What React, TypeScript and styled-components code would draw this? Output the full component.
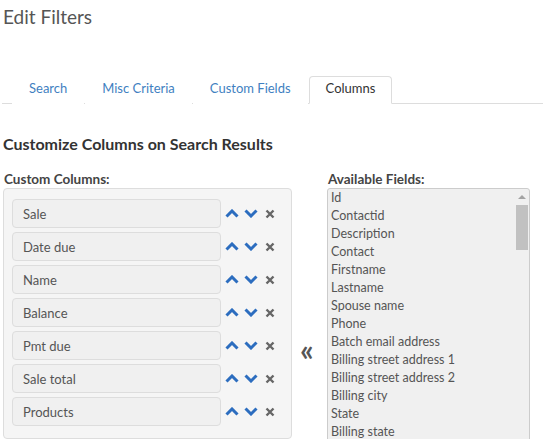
import React from "react";
import styled, { createGlobalStyle } from "styled-components";

const customColumns = ["Sale", "Date due", "Name", "Balance", "Pmt due", "Sale total", "Products"];

const availableFields = [
  "Id",
  "Contactid",
  "Description",
  "Contact",
  "Firstname",
  "Lastname",
  "Spouse name",
  "Phone",
  "Batch email address",
  "Billing street address 1",
  "Billing street address 2",
  "Billing city",
  "State",
  "Billing state",
  "Billing zip",
  "Country",
];

const tabs = ["Search", "Misc Criteria", "Custom Fields", "Columns"];

const App: React.FC = () => {
  return (
    <Page>
      <GlobalStyle />
      <Title>Edit Filters</Title>

      <TabBar>
        {tabs.map((t) => (
          <Tab key={t} $active={t === "Columns"}>
            {t}
          </Tab>
        ))}
      </TabBar>

      <Heading>Customize Columns on Search Results</Heading>

      <Columns>
        <div>
          <Label>Custom Columns:</Label>
          <Panel>
            {customColumns.map((c) => (
              <ItemRow key={c}>
                <Item>{c}</Item>
                <Controls>
                  <IconButton>
                    <svg width="14" height="9" viewBox="0 0 14 9">
                      <polyline points="1.5,7.5 7,2 12.5,7.5" fill="none" stroke="#2c6dbf" strokeWidth="3" />
                    </svg>
                  </IconButton>
                  <IconButton>
                    <svg width="14" height="9" viewBox="0 0 14 9">
                      <polyline points="1.5,1.5 7,7 12.5,1.5" fill="none" stroke="#2c6dbf" strokeWidth="3" />
                    </svg>
                  </IconButton>
                  <IconButton>
                    <svg width="10" height="10" viewBox="0 0 10 10">
                      <path d="M1.5 1.5 L8.5 8.5 M8.5 1.5 L1.5 8.5" stroke="#666" strokeWidth="2.4" />
                    </svg>
                  </IconButton>
                </Controls>
              </ItemRow>
            ))}
          </Panel>
        </div>

        <Middle>
          <MoveLeft>«</MoveLeft>
        </Middle>

        <div>
          <Label>Available Fields:</Label>
          <ListBox>
            <ListItems>
              {availableFields.map((f) => (
                <ListItem key={f}>{f}</ListItem>
              ))}
            </ListItems>
            <ScrollTrack>
              <ScrollArrow />
              <ScrollThumb />
            </ScrollTrack>
          </ListBox>
        </div>
      </Columns>
    </Page>
  );
};

export default App;

const GlobalStyle = createGlobalStyle`
  body {
    margin: 0;
    background: #fff;
    font-family: Lato, "Liberation Sans", sans-serif;
    color: #555;
  }
`;

const Page = styled.div`
  padding: 0 0 0 3px;
  height: 439px;
  overflow: hidden;
`;

const Title = styled.h1`
  margin: 0;
  padding-top: 5px;
  font-size: 19px;
  font-weight: 400;
  line-height: 24px;
  color: #555;
`;

const TabBar = styled.div`
  display: flex;
  gap: 1px;
  margin: 47px 0 0 -1px;
  padding-left: 10px;
  border-bottom: 1px solid #ddd;
`;

const Tab = styled.div<{ $active?: boolean }>`
  height: 26px;
  box-sizing: content-box;
  line-height: 23px;
  padding: 0 16px;
  font-size: 13px;
  color: ${(p) => (p.$active ? "#333" : "#3f7fc1")};
  background: #fff;
  border: 1px solid ${(p) => (p.$active ? "#ddd" : "transparent")};
  border-bottom: 1px solid ${(p) => (p.$active ? "#fff" : "transparent")};
  border-radius: 4px 4px 0 0;
  margin-bottom: -1px;
`;

const Heading = styled.h2`
  margin: 30px 0 0 0;
  font-size: 16px;
  font-weight: 700;
  line-height: 20px;
  color: #333;
`;

const Columns = styled.div`
  display: grid;
  grid-template-columns: 289px 35px 203px;
  margin-top: 17px;
`;

const Label = styled.div`
  font-size: 13.5px;
  font-weight: 700;
  line-height: 16px;
  color: #444;
  padding-left: 1px;
  margin-bottom: 1px;
`;

const Panel = styled.div`
  display: flex;
  flex-direction: column;
  gap: 4px;
  padding: 10px 8px 12px 8px;
  background: #f5f5f5;
  border: 1px solid #ddd;
  border-radius: 4px;
`;

const ItemRow = styled.div`
  display: flex;
  align-items: center;
`;

const Item = styled.div`
  width: 209px;
  height: 29px;
  box-sizing: border-box;
  line-height: 29px;
  padding-left: 10px;
  font-size: 13px;
  color: #555;
  background: #f0f0f0;
  border: 1px solid #ddd;
  border-radius: 4px;
`;

const Controls = styled.div`
  display: flex;
  align-items: center;
  gap: 4px;
  margin-left: 3px;
`;

const IconButton = styled.span`
  display: flex;
  align-items: center;
  justify-content: center;
  width: 15px;
  height: 14px;
`;

const Middle = styled.div`
  padding-top: 166px;
  padding-left: 8px;
`;

const MoveLeft = styled.span`
  font-size: 30px;
  font-weight: 700;
  line-height: 24px;
  color: #555;
`;

const ListBox = styled.div`
  display: flex;
  height: 260px;
  background: #f0f0f0;
  border: 1px solid #ccc;
  border-radius: 3px;
  overflow: hidden;
`;

const ListItems = styled.div`
  flex: 1;
  padding: 0 0 0 3px;
`;

const ListItem = styled.div`
  font-size: 12.5px;
  line-height: 18px;
  color: #555;
  white-space: nowrap;
`;

const ScrollTrack = styled.div`
  width: 15px;
  display: flex;
  flex-direction: column;
  align-items: center;
`;

const ScrollArrow = styled.div`
  margin-top: 6px;
  width: 0;
  height: 0;
  border-left: 4px solid transparent;
  border-right: 4px solid transparent;
  border-bottom: 4px solid #a3a3a3;
`;

const ScrollThumb = styled.div`
  margin-top: 6px;
  width: 12px;
  height: 45px;
  background: #c1c1c1;
`;
